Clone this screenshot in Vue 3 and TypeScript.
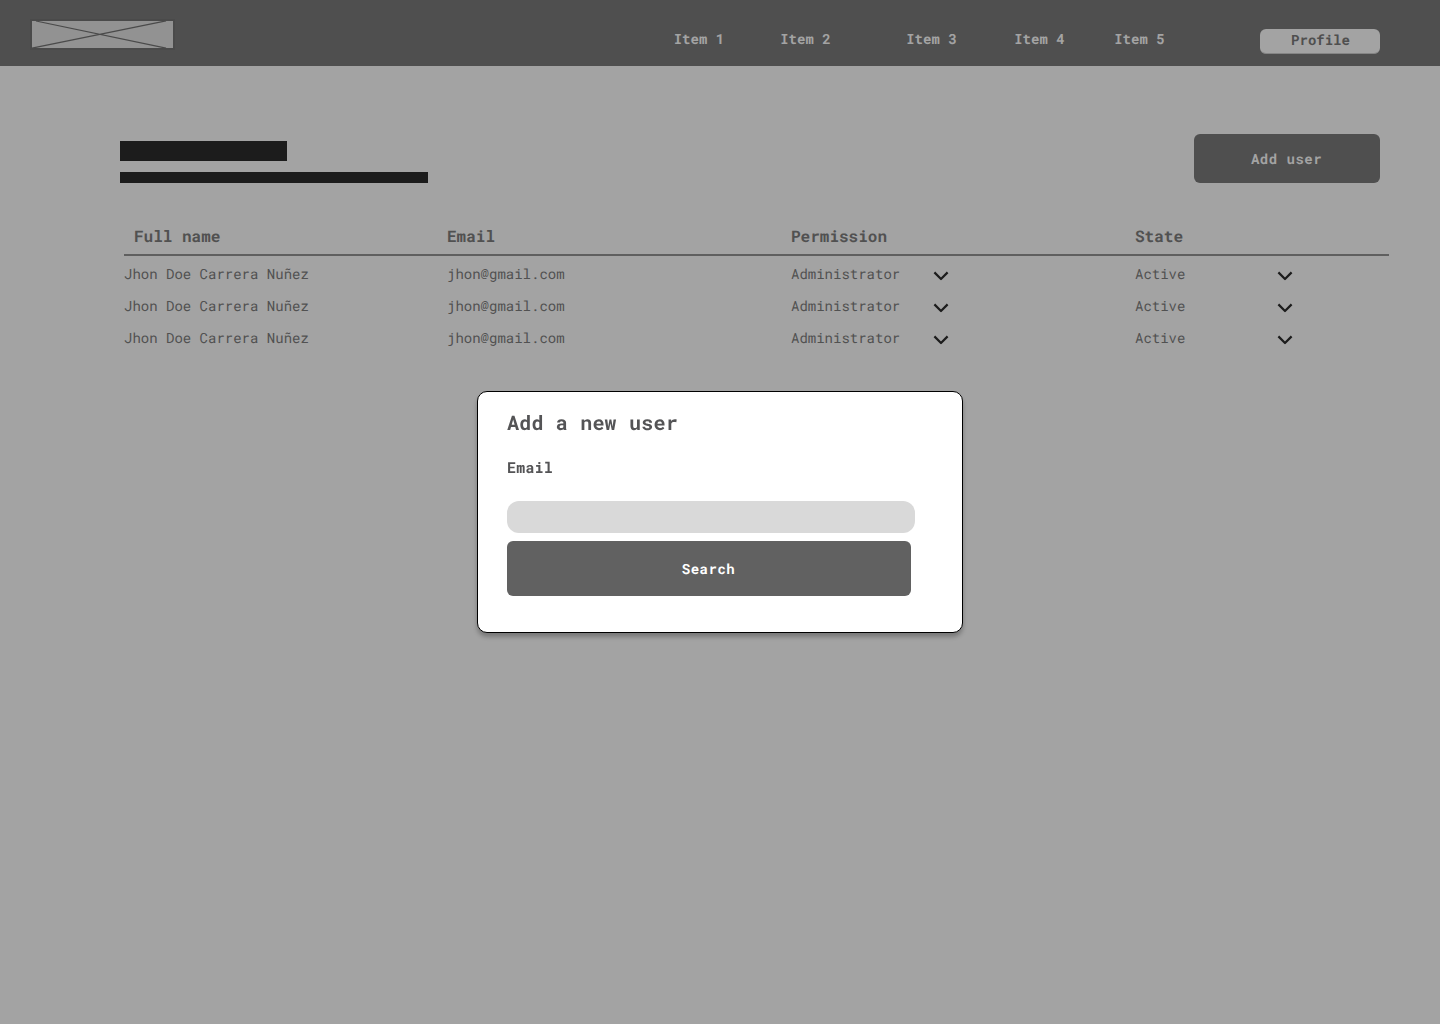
<script setup lang="ts">
interface User {
  name: string
  email: string
  permission: string
  state: string
}

const navItems: string[] = ['Item 1', 'Item 2', 'Item 3', 'Item 4', 'Item 5']

const users: User[] = Array.from({ length: 3 }, () => ({
  name: 'Jhon Doe Carrera Nuñez',
  email: 'jhon@gmail.com',
  permission: 'Administrator',
  state: 'Active',
}))
</script>

<template>
  <div class="page">
    <header class="topbar">
      <svg class="logo" width="145" height="31" viewBox="0 0 145 31">
        <rect x="1" y="1" width="143" height="29" fill="#929292" stroke="#4a4a4a" stroke-width="2" />
        <path d="M6 2 L136 29.2 M136 1.8 L2 29.2" fill="none" stroke="#4a4a4a" stroke-width="1.2" />
      </svg>
      <nav class="nav">
        <a v-for="item in navItems" :key="item" class="nav-item">{{ item }}</a>
      </nav>
      <button class="profile">Profile</button>
    </header>

    <main class="content">
      <div class="heading">
        <div class="titles">
          <div class="bar bar-title"></div>
          <div class="bar bar-subtitle"></div>
        </div>
        <button class="add-user">Add user</button>
      </div>

      <section class="table">
        <div class="row row-head">
          <span class="first">Full name</span>
          <span>Email</span>
          <span>Permission</span>
          <span>State</span>
        </div>
        <div v-for="(user, i) in users" :key="i" class="row">
          <span>{{ user.name }}</span>
          <span>{{ user.email }}</span>
          <span class="select">
            {{ user.permission }}
            <svg width="16" height="10" viewBox="0 0 16 10"><path d="M1.4 1.4 L8 8 L14.6 1.4" /></svg>
          </span>
          <span class="select">
            {{ user.state }}
            <svg width="16" height="10" viewBox="0 0 16 10"><path d="M1.4 1.4 L8 8 L14.6 1.4" /></svg>
          </span>
        </div>
      </section>
    </main>

    <div class="overlay">
      <form class="modal" @submit.prevent>
        <h2>Add a new user</h2>
        <label for="email">Email</label>
        <input id="email" type="text" />
        <button class="search" type="submit">Search</button>
      </form>
    </div>
  </div>
</template>

<style>
body {
  background: #a3a3a3;
}
</style>

<style scoped>
.page {
  box-sizing: border-box;
  min-height: 1024px;
  background: #a3a3a3;
  color: #515151;
  font-family: 'Roboto Mono', 'Liberation Mono', monospace;
  font-size: 14px;
  text-rendering: geometricPrecision;
}
button,
input {
  border: 0;
  padding: 0;
  font-family: inherit;
  text-rendering: inherit;
}
.topbar {
  display: flex;
  box-sizing: border-box;
  height: 66px;
  padding: 19px 60px 0 30px;
  background: #4f4f4f;
}
.logo {
  flex: none;
}
.nav {
  display: flex;
  margin: 9px 0 0 498.7px;
  color: #a3a3a3;
  font-weight: 700;
  line-height: 22px;
}
.nav-item {
  width: 100px;
}
.nav-item:nth-child(1) {
  width: 106.5px;
}
.nav-item:nth-child(2) {
  width: 126px;
}
.nav-item:nth-child(3) {
  width: 108px;
}
.profile {
  width: 120px;
  height: 25px;
  margin: 10px 0 0 auto;
  padding: 0 0 3px 1px;
  border-bottom: 1px solid #858585;
  border-radius: 6px;
  background: #a3a3a3;
  color: #4f4f4f;
  font-size: 14px;
  font-weight: 700;
  line-height: 20px;
}
.content {
  padding: 68px 51px 0 120px;
}
.heading {
  display: flex;
  justify-content: space-between;
  padding-right: 9px;
}
.titles {
  padding-top: 7px;
}
.bar {
  background: #1c1c1c;
}
.bar-title {
  width: 167px;
  height: 20px;
}
.bar-subtitle {
  width: 308px;
  height: 11px;
  margin-top: 11px;
}
.add-user {
  width: 186px;
  height: 49px;
  padding-right: 1px;
  border-radius: 6px;
  background: #4f4f4f;
  color: #a3a3a3;
  font-size: 14px;
  font-weight: 700;
  letter-spacing: 0.5px;
}
.table {
  margin: 34px 0 0 4px;
}
.row {
  display: grid;
  grid-template-columns: 323px 344px 344px 1fr;
  height: 32px;
  line-height: 30px;
}
.row-head {
  height: 37px;
  margin-bottom: 3px;
  border-bottom: 2px solid #5f5f5f;
  font-size: 16px;
  font-weight: 700;
  line-height: 39px;
}
.first {
  padding-left: 10px;
}
.select {
  display: flex;
  align-items: center;
  justify-content: space-between;
  width: 158px;
  height: 30px;
}
.select svg {
  margin-top: 4px;
  fill: none;
  stroke: #1c1c1c;
  stroke-width: 2.2;
  stroke-linejoin: round;
}
.overlay {
  position: fixed;
  inset: 0;
  display: flex;
  align-items: center;
  justify-content: center;
}
.modal {
  display: flex;
  flex-direction: column;
  align-items: flex-start;
  box-sizing: border-box;
  width: 486px;
  height: 242px;
  padding: 16px 29px 0;
  border: 1px solid #000;
  border-radius: 10px;
  background: #fff;
  box-shadow: 0 4px 4px rgba(0, 0, 0, 0.25);
  color: #545456;
}
.modal h2 {
  margin: 0;
  font-size: 20px;
  font-weight: 700;
  letter-spacing: 0.2px;
  line-height: 30px;
}
.modal label {
  margin-top: 18px;
  font-size: 15px;
  font-weight: 700;
  letter-spacing: 0.2px;
  line-height: 24px;
}
.modal input {
  width: 408px;
  height: 32px;
  margin-top: 21px;
  border-radius: 12px;
  background: #d9d9d9;
}
.search {
  width: 404px;
  height: 55px;
  margin-top: 8px;
  padding-right: 1px;
  border-radius: 6px;
  background: #616161;
  color: #fff;
  font-size: 14px;
  font-weight: 700;
  letter-spacing: 0.5px;
}
</style>
